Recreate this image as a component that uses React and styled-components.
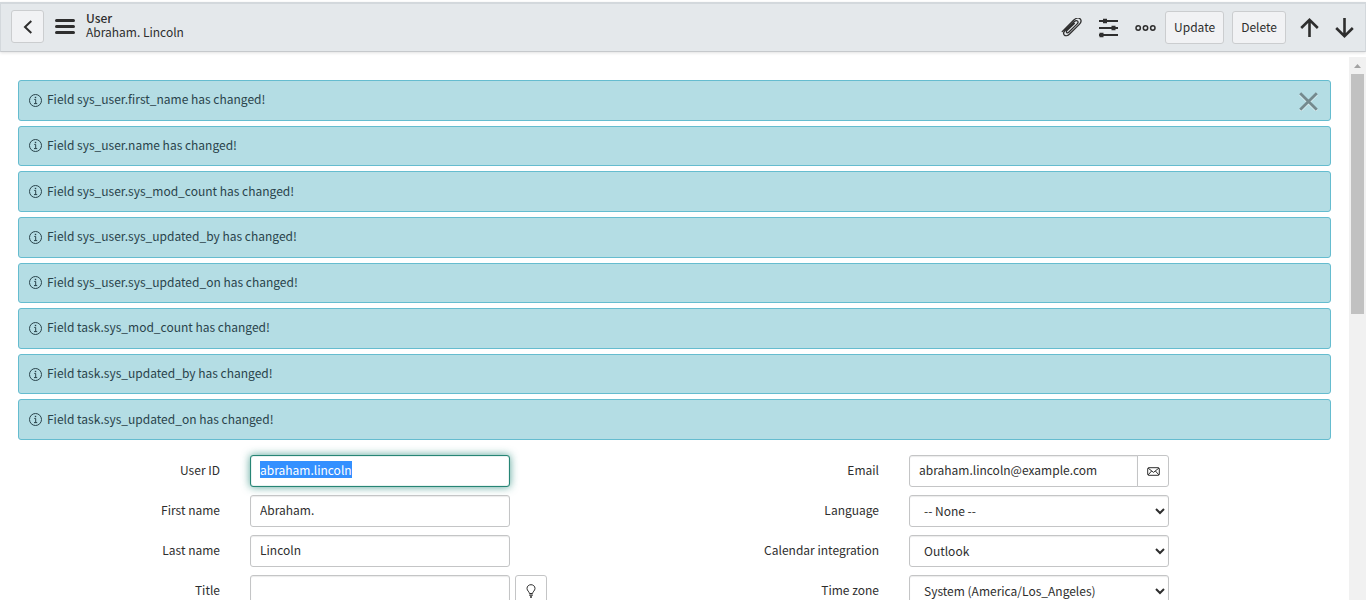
import React, { useEffect, useRef } from "react";
import styled, { createGlobalStyle, css } from "styled-components";

const GlobalStyle = createGlobalStyle`
  *, *::before, *::after { box-sizing: border-box; }
  html, body { margin: 0; background: #fff; }
  body, button, input, select {
    font-family: "Noto Sans CJK SC", "Source Sans Pro", sans-serif;
    font-size: 12px;
    line-height: 17px;
    color: #2e2e2e;
  }
  ::selection { background: #3390ff; color: #fff; }
`;

const Page = styled.div`
  display: flex;
  flex-direction: column;
  height: 100vh;
  padding-top: 2px;
  overflow: hidden;
`;

const Header = styled.header`
  display: flex;
  align-items: center;
  flex: none;
  height: 50px;
  padding: 0 11px 0 10px;
  background: #e4e8eb;
  border: 1px solid #d3d8dc;
  border-top-width: 2px;
  border-bottom-color: #c6c9cc;
  box-shadow: 0 1px 3px rgba(0, 0, 0, 0.12);
`;

const TitleGroup = styled.div`
  display: flex;
  flex: 1;
  align-items: center;
  gap: 11px;
  padding-bottom: 2px;
`;

const Button = styled.button`
  display: flex;
  align-items: center;
  justify-content: center;
  height: 33px;
  padding: 0 8px 3px;
  background: #f1f2f4;
  border: 1px solid #cbcdcf;
  border-radius: 3px;
  cursor: pointer;
`;

const BackButton = styled(Button)`
  width: 33px;
  padding: 0;
`;

const IconButton = styled.button`
  display: flex;
  padding: 0;
  background: none;
  border: 0;
  cursor: pointer;
`;

const Heading = styled.h1`
  display: flex;
  flex-direction: column;
  margin: 0;
  padding-bottom: 3px;
  font-size: 12px;
  font-weight: 400;
  line-height: 14px;
`;

const HeadingType = styled.span`
  font-weight: 500;
`;

const IconGroup = styled.div`
  display: flex;
  align-items: center;
  gap: 16px;
  margin-right: 9px;
`;

const ActionGroup = styled.div`
  display: flex;
  gap: 8px;
  margin-right: 14px;
`;

const ArrowGroup = styled.div`
  display: flex;
  gap: 16px;
`;

const Body = styled.div`
  display: flex;
  flex: 1;
  min-height: 0;
  padding-top: 5px;
`;

const Content = styled.main`
  flex: 1;
  min-width: 0;
  overflow: hidden;
  padding-top: 23px;
`;

const ScrollTrack = styled.div`
  flex: none;
  width: 17px;
  padding: 0 2px;
  background: #f1f1f1;
`;

const ScrollArrow = styled.svg`
  display: block;
  width: 13px;
  height: 17px;
`;

const ScrollThumb = styled.div`
  height: 240px;
  background: #c1c1c1;
`;

const Alerts = styled.ul`
  position: relative;
  display: grid;
  grid-auto-rows: 1fr;
  gap: 5px;
  min-height: 360px;
  margin: 0 18px 15px;
  padding: 0;
  list-style: none;
`;

const Alert = styled.li`
  display: flex;
  align-items: center;
  gap: 5px;
  padding: 0 10px;
  color: #29434b;
  background: #b4dde4;
  border: 1px solid #65bccf;
  border-radius: 3px;
`;

const AlertText = styled.span`
  padding-bottom: 3px;
`;

const CloseButton = styled(IconButton)`
  position: absolute;
  top: 12px;
  right: 13px;
`;

const Form = styled.form`
  display: grid;
  grid-template-columns: 1fr 1fr;
  padding: 0 16px 0 15px;
`;

const Column = styled.div`
  display: flex;
  flex-direction: column;
  gap: 8px;
`;

const Row = styled.div`
  display: flex;
  align-items: center;
`;

const Label = styled.label`
  width: 205px;
  margin-right: 30px;
  padding-bottom: 3px;
  text-align: right;
`;

const control = css`
  height: 32px;
  background: #fff;
  border: 1px solid #c4c5c6;
  border-radius: 3px;
  box-shadow: inset 0 1px 1px rgba(0, 0, 0, 0.08);
  outline: 0;
`;

const Input = styled.input`
  ${control}
  width: ${(p) => (p.$joined ? 229 : 260)}px;
  padding: 0 9px 3px;
  ${(p) => p.$joined && "border-radius: 3px 0 0 3px;"}

  &:focus {
    border-color: #278575;
    box-shadow: 0 0 8px rgba(31, 132, 118, 0.75), inset 0 0 1px #278575;
  }
`;

const Select = styled.select`
  ${control}
  width: 260px;
  padding: 0 1px 1px 10px;
`;

const FieldButton = styled.button`
  ${control}
  display: flex;
  align-items: center;
  justify-content: center;
  width: 32px;
  margin-left: ${(p) => (p.$joined ? -1 : 5)}px;
  padding: 0;
  box-shadow: none;
  ${(p) => p.$joined && "border-radius: 0 3px 3px 0;"}
`;

const Svg = ({ w, h, sw = 2, children }) => (
  <svg width={w} height={h} viewBox={`0 0 ${w} ${h}`} fill="none" stroke="#2e2e2e" strokeWidth={sw} aria-hidden="true">
    {children}
  </svg>
);

const InfoIcon = () => (
  <svg width="13" height="13" viewBox="0 0 13 13" fill="none" stroke="#29434b" aria-hidden="true">
    <circle cx="6.5" cy="6.5" r="6" />
    <path d="M5.3 5.5H6.7V9.5M5 9.6H8.2" />
    <path d="M5.8 3.5H7.2" strokeWidth="1.4" />
  </svg>
);

const messages = [
  "Field sys_user.first_name has changed!",
  "Field sys_user.name has changed!",
  "Field sys_user.sys_mod_count has changed!",
  "Field sys_user.sys_updated_by has changed!",
  "Field sys_user.sys_updated_on has changed!",
  "Field task.sys_mod_count has changed!",
  "Field task.sys_updated_by has changed!",
  "Field task.sys_updated_on has changed!",
];

const selects = [
  ["language", "Language", "-- None --"],
  ["calendar", "Calendar integration", "Outlook"],
  ["timezone", "Time zone", "System (America/Los_Angeles)"],
];

export default function App() {
  const userId = useRef(null);

  useEffect(() => {
    userId.current.focus({ preventScroll: true });
    userId.current.select();
  }, []);

  return (
    <Page>
      <GlobalStyle />
      <Header>
        <TitleGroup>
          <BackButton aria-label="Back">
            <Svg w={10} h={14}><path d="M8.3 1L2 7L8.3 13" /></Svg>
          </BackButton>
          <IconButton aria-label="Menu">
            <Svg w={20} h={16} sw={3}>
              <path d="M1.5 1.5H18.5M1.5 7.5H18.5M1.5 13.5H18.5" strokeLinecap="round" />
            </Svg>
          </IconButton>
          <Heading>
            <HeadingType>User</HeadingType>
            <span>Abraham. Lincoln</span>
          </Heading>
        </TitleGroup>
        <IconGroup>
          <IconButton aria-label="Attachments">
            <Svg w={21} h={20} sw={1.3}>
              <path
                d="M1.2 13.6L12.8 2C15.2 -.2 18 -.2 19.2 .9C20.5 2.3 20.1 4.6 18.1 6.6L8.6 16C6.8 17.8 4.5 18.2 3.3 17C2.2 15.8 2.6 14 4.1 12.5L13.2 3.7C14.5 2.5 15.9 2.4 16.6 3.1C17.3 3.8 17 5.1 16 6.1L8 14C7.2 14.8 6.2 15 5.7 14.5C5.2 14 5.4 13.1 6.2 12.3L13.3 5.5"
                strokeLinecap="round"
              />
            </Svg>
          </IconButton>
          <IconButton aria-label="Personalize form">
            <Svg w={21} h={20}>
              <path d="M1 3H20M1 10H20M1 17H20" />
              <path d="M7 .8V5.2M15.5 7.8V12.2M3.5 14.8V19.2" strokeWidth="4" />
            </Svg>
          </IconButton>
          <IconButton aria-label="More options">
            <Svg w={21} h={8} sw={1.5}>
              <circle cx="3.2" cy="4" r="2.2" />
              <circle cx="10.5" cy="4" r="2.2" />
              <circle cx="17.8" cy="4" r="2.2" />
            </Svg>
          </IconButton>
        </IconGroup>
        <ActionGroup>
          <Button>Update</Button>
          <Button>Delete</Button>
        </ActionGroup>
        <ArrowGroup>
          <IconButton aria-label="Previous record">
            <Svg w={19} h={20} sw={2.6}><path d="M9.5 19V2M1.2 10L9.5 1.9L17.8 10" /></Svg>
          </IconButton>
          <IconButton aria-label="Next record">
            <Svg w={19} h={20} sw={2.6}><path d="M9.5 0V18M1.2 10L9.5 18.1L17.8 10" /></Svg>
          </IconButton>
        </ArrowGroup>
      </Header>
      <Body>
        <Content>
          <Alerts>
            {messages.map((m) => (
              <Alert key={m}>
                <InfoIcon />
                <AlertText>{m}</AlertText>
              </Alert>
            ))}
            <CloseButton as="button" aria-label="Close messages">
              <svg width="19" height="19" viewBox="0 0 19 19" fill="none" strokeWidth="2.8" aria-hidden="true">
                <path d="M1.2 2.2L17.8 18.8M17.8 2.2L1.2 18.8" stroke="#dff0f3" />
                <path d="M1.2 1.2L17.8 17.8M17.8 1.2L1.2 17.8" stroke="#748a8e" />
              </svg>
            </CloseButton>
          </Alerts>
          <Form onSubmit={(e) => e.preventDefault()}>
            <Column>
              <Row>
                <Label htmlFor="user-id">User ID</Label>
                <Input id="user-id" ref={userId} defaultValue="abraham.lincoln" />
              </Row>
              <Row>
                <Label htmlFor="first-name">First name</Label>
                <Input id="first-name" defaultValue="Abraham." />
              </Row>
              <Row>
                <Label htmlFor="last-name">Last name</Label>
                <Input id="last-name" defaultValue="Lincoln" />
              </Row>
              <Row>
                <Label htmlFor="title">Title</Label>
                <Input id="title" />
                <FieldButton type="button" aria-label="Suggestions">
                  <Svg w={10} h={14} sw={1}>
                    <path d="M3.4 9.5C3.4 7.6 1 6.8 1 4.4C1 2.2 2.8 .7 5 .7S9 2.2 9 4.4C9 6.8 6.6 7.6 6.6 9.5Z" />
                    <path d="M3.2 11.2H6.8M4 13H6" strokeWidth="1.3" />
                  </Svg>
                </FieldButton>
              </Row>
            </Column>
            <Column>
              <Row>
                <Label htmlFor="email">Email</Label>
                <Input id="email" type="email" $joined defaultValue="abraham.lincoln@example.com" />
                <FieldButton type="button" $joined aria-label="Send email">
                  <Svg w={13} h={9} sw={1}>
                    <rect x=".7" y=".7" width="11.6" height="7.6" rx="1" />
                    <path d="M1 1L6.5 5.4L12 1M1 8L4.6 4M12 8L8.4 4" />
                  </Svg>
                </FieldButton>
              </Row>
              {selects.map(([id, label, value]) => (
                <Row key={id}>
                  <Label htmlFor={id}>{label}</Label>
                  <Select id={id} defaultValue={value}>
                    <option>{value}</option>
                  </Select>
                </Row>
              ))}
            </Column>
          </Form>
        </Content>
        <ScrollTrack aria-hidden="true">
          <ScrollArrow viewBox="0 0 13 17">
            <path d="M3 11L6.5 7L10 11Z" fill="#a3a3a3" />
          </ScrollArrow>
          <ScrollThumb />
        </ScrollTrack>
      </Body>
    </Page>
  );
}
